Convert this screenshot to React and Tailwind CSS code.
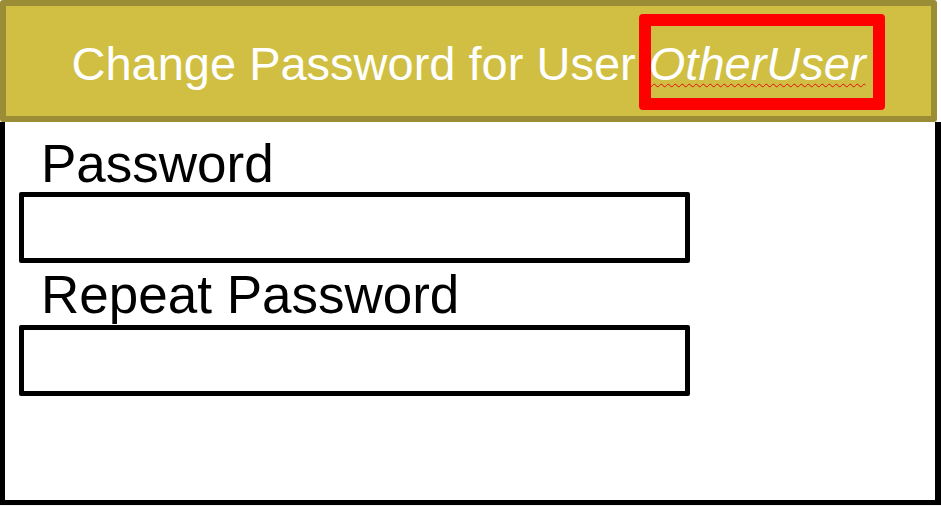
export default function App() {
    return (
        <div className="w-[941px] h-[506px] bg-[#f4f4f4]" style={{ fontFamily: '"Liberation Sans", Arial, sans-serif' }}>
            <div className="w-[941px] h-[505px] flex flex-col items-start bg-white">
                {/* Header bar */}
                <div className="w-[937px] h-[122px] shrink-0 bg-[#d0bf42] border-[6px] border-[#9b8c36] rounded-[3px] flex justify-center pt-[34px]">
                    <p className="text-[47px] leading-none text-white whitespace-nowrap">
                        Change Password for User{" "}
                        <span className="relative inline-block italic underline decoration-wavy decoration-[#e01010] decoration-1 underline-offset-[3px]">
                            OtherUser
                            <span className="absolute -left-[10px] -right-[19px] -top-[26px] -bottom-[23px] border-[12px] border-[#ff0000] rounded-[4px]"></span>
                        </span>
                    </p>
                </div>

                {/* Form body */}
                <div className="w-full flex-1 border-l-[5px] border-r-[6px] border-b-[5px] border-black pl-[14px] pt-[15px]">
                    <label className="block pl-[22px] text-[53px] leading-none text-black">Password</label>
                    <input type="password" className="block mt-[2px] w-[671px] h-[71px] border-[5px] border-black rounded-[2px] outline-none" />
                    <label className="block mt-[5px] pl-[22px] text-[53px] leading-none text-black">Repeat Password</label>
                    <input type="password" className="block mt-[4px] w-[671px] h-[71px] border-[5px] border-black rounded-[2px] outline-none" />
                </div>
            </div>
        </div>
    );
}
